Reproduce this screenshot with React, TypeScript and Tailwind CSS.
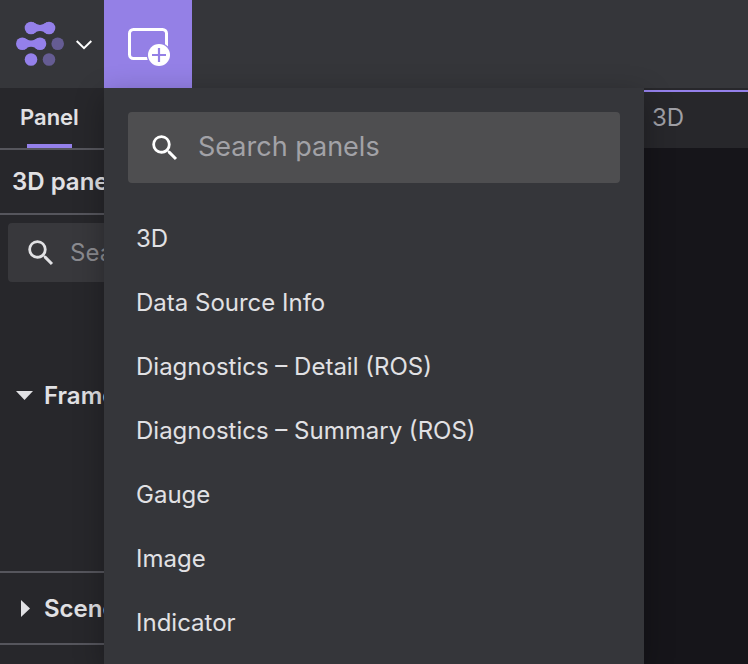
import React from "react";

const panels = [
  "3D",
  "Data Source Info",
  "Diagnostics – Detail (ROS)",
  "Diagnostics – Summary (ROS)",
  "Gauge",
  "Image",
  "Indicator",
];

function Logo() {
  return (
    <svg width="48" height="46" viewBox="0 0 48 46" aria-hidden="true">
      <g fill="#9480ea">
        <circle cx="15" cy="7" r="6.3" />
        <circle cx="33" cy="7" r="6.3" />
        <path d="M17 1.3C20 2.500 21 3.900 24 3.900S28 2.500 31 1.300V12.700C28 11.500 27 10.100 24 10.100S20 11.500 17 12.700Z" />
        <circle cx="6.3" cy="22.700" r="6.3" />
        <circle cx="24" cy="22.700" r="6.3" />
        <path d="M8 17C11 18.200 12 19.600 15 19.600S19 18.200 22 17V28.400C19 27.200 18 25.800 15 25.800S11 27.200 8 28.400Z" />
        <circle cx="15" cy="38.500" r="6.3" />
      </g>
      <g fill="#655c93">
        <circle cx="41.7" cy="22.700" r="6.3" />
        <circle cx="33" cy="38.500" r="6.3" />
      </g>
    </svg>
  );
}

function SearchIcon() {
  return (
    <svg width="34" height="34" viewBox="0 0 24 24" fill="currentColor" className="shrink-0" aria-hidden="true">
      <path d="M15.5 14h-.79l-.28-.27A6.47 6.47 0 0 0 16 9.5 6.5 6.5 0 1 0 9.5 16c1.61 0 3.09-.59 4.23-1.57l.27.28v.79l5 4.99L20.49 19l-4.99-5zm-6 0C7.01 14 5 11.99 5 9.5S7.01 5 9.5 5 14 7.01 14 9.5 11.99 14 9.5 14z" />
    </svg>
  );
}

function AddPanelIcon() {
  return (
    <svg width="44" height="40" viewBox="0 0 44 40" aria-hidden="true">
      <rect x="3.5" y="3.5" width="37" height="29" rx="4" fill="none" stroke="#fff" strokeWidth="3" />
      <circle cx="33" cy="29" r="12.3" fill="#9480e6" />
      <circle cx="33" cy="29" r="11" fill="#fff" />
      <path d="M33 22v14M26 29h14" stroke="#9480e6" strokeWidth="2.2" />
    </svg>
  );
}

function PanelMenu() {
  return (
    <div className="absolute top-full left-0 h-[calc(100vh-88px)] w-[540px] overflow-hidden bg-[#35363a] pt-6 shadow-[0_8px_28px_rgba(0,0,0,0.3)]">
      <label className="mx-6 flex h-[71px] items-center rounded bg-[#4e4e50] pl-5 text-white">
        <SearchIcon />
        <input
          type="text"
          aria-label="Search panels"
          placeholder="Search panels"
          className="ml-4 min-w-0 flex-1 bg-transparent text-[27px] text-[#e1e1e4] outline-none placeholder:text-[#a2a2a7]"
        />
      </label>
      <ul className="mt-6">
        {panels.map((name) => (
          <li key={name}>
            <button type="button" className="block h-16 w-full px-8 text-left text-2xl">
              {name}
            </button>
          </li>
        ))}
      </ul>
    </div>
  );
}

function Header() {
  return (
    <header className="relative z-10 flex h-[88px] shrink-0 bg-[#35363a]">
      <button type="button" aria-label="Main menu" className="flex w-[104px] items-center gap-3 pl-4">
        <Logo />
        <svg width="16" height="12" viewBox="0 0 16 12" fill="none" stroke="#fff" strokeWidth="2" aria-hidden="true">
          <path d="M0.700 3 8 10.200 15.300 3" />
        </svg>
      </button>
      <div className="relative">
        <button type="button" aria-label="Add panel" className="flex size-[88px] items-center justify-center bg-[#9480e6] pt-1">
          <AddPanelIcon />
        </button>
        <PanelMenu />
      </div>
    </header>
  );
}

function Sidebar() {
  return (
    <aside className="w-[640px] shrink-0 bg-[#27272b] font-semibold">
      <div className="flex h-[62px] border-b-2 border-[#56565d]">
        <button type="button" className="flex flex-col items-center px-5">
          <span className="flex flex-1 items-center pt-0.5 text-[22px]">Panel</span>
          <span className="h-1 w-[45px] bg-[#9480ea]" />
        </button>
      </div>
      <h2 className="flex h-[65px] items-center border-b-2 border-[#56565d] px-3 text-2xl">3D panel</h2>
      <label className="mx-2 mt-2 flex h-[59px] items-center rounded bg-[#38383c] pl-4">
        <SearchIcon />
        <input
          type="text"
          aria-label="Search settings"
          placeholder="Search"
          className="ml-3 min-w-0 flex-1 bg-transparent text-2xl font-normal outline-none placeholder:text-[#8b8b90]"
        />
      </label>
      <section className="mt-[78px] h-[213px] border-b-2 border-[#56565d]">
        <button type="button" className="flex h-[72px] items-center gap-2.5 pl-4 text-2xl">
          <svg width="18" height="18" viewBox="0 0 18 18" fill="currentColor" aria-hidden="true">
            <path d="M0 4h17L8.500 13z" />
          </svg>
          Frame
        </button>
      </section>
      <section className="h-[72px] border-b-2 border-[#56565d]">
        <button type="button" className="flex h-[72px] items-center gap-2.5 pl-4 text-2xl">
          <svg width="18" height="18" viewBox="0 0 18 18" fill="currentColor" aria-hidden="true">
            <path d="M5 0v17l9-8.500z" />
          </svg>
          Scene
        </button>
      </section>
    </aside>
  );
}

export default function App() {
  return (
    <div className="flex h-screen flex-col overflow-hidden bg-[#16151a] font-['Inter',sans-serif] text-[#e1e1e4]">
      <Header />
      <div className="flex min-h-0 flex-1">
        <Sidebar />
        <main className="min-w-0 flex-1">
          <div className="bg-[#27272b] pt-0.5">
            <div className="flex h-[58px] items-center border-t-2 border-[#9480ea] px-3 pb-1 text-2xl text-[#9f9fa5]">3D</div>
          </div>
        </main>
      </div>
    </div>
  );
}
